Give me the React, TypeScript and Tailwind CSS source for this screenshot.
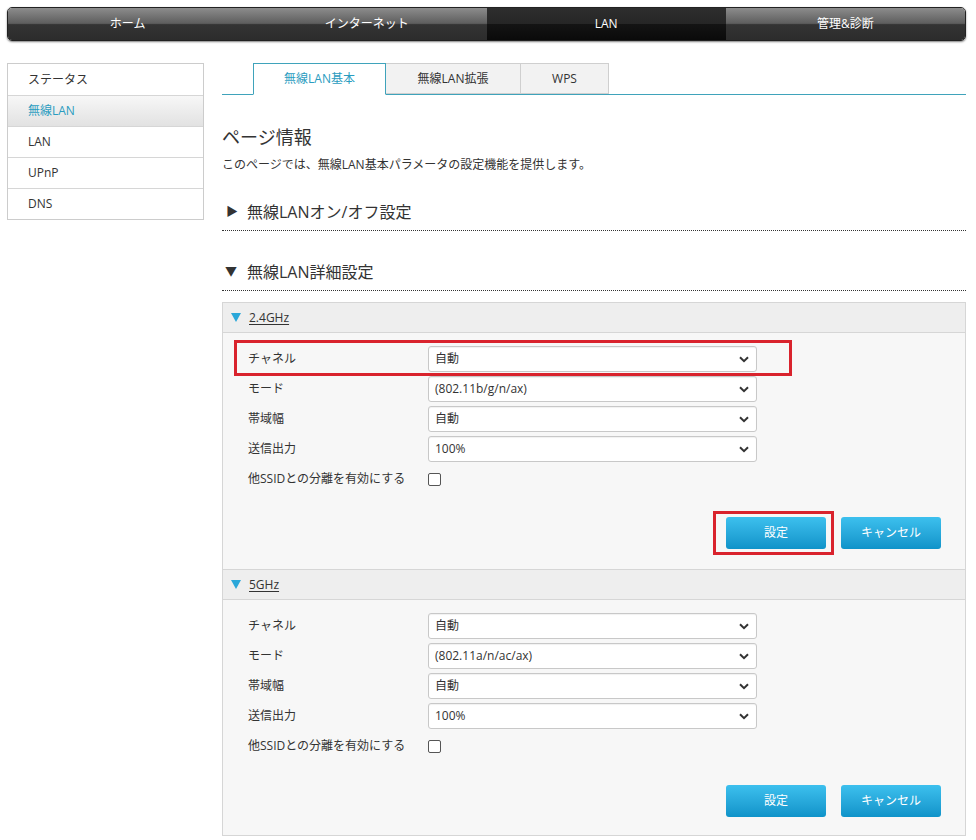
import { useState } from 'react';

const font = { fontFamily: '"Open Sans", "Noto Sans CJK JP", sans-serif' };

const navItems = ['ホーム', 'インターネット', 'LAN', '管理&診断'];
const sideItems = ['ステータス', '無線LAN', 'LAN', 'UPnP', 'DNS'];

type Band = {
  name: string;
  mode: string;
};

const bands: Band[] = [
  { name: '2.4GHz', mode: '(802.11b/g/n/ax)' },
  { name: '5GHz', mode: '(802.11a/n/ac/ax)' },
];

const Select = ({ value }: { value: string }) => (
  <div className="relative w-[329px] h-[26px] bg-white border border-[#c8c8c8] rounded-[3px] shadow-[inset_0_1px_1px_rgba(0,0,0,0.06)] flex items-center pl-[6px] text-[12px] text-[#333]">
    {value}
    <svg
      className="absolute right-[7px] top-[9px]"
      width="10"
      height="7"
      viewBox="0 0 10 7"
    >
      <path d="M1 1.2 L5 5.2 L9 1.2" fill="none" stroke="#333" strokeWidth="2" />
    </svg>
  </div>
);

const BandPanel = ({ band, highlight }: { band: Band; highlight: boolean }) => {
  const rows = [
    { label: 'チャネル', value: '自動' },
    { label: 'モード', value: band.mode },
    { label: '帯域幅', value: '自動' },
    { label: '送信出力', value: '100%' },
  ];
  return (
    <div>
      <div className="h-[30px] bg-[#eeeeee] border-b border-[#d6d6d6] flex items-center pl-[8px] gap-[8px]">
        <svg width="10" height="9" viewBox="0 0 10 9">
          <path d="M0 0 L10 0 L5 9 Z" fill="#2aa7d9" />
        </svg>
        <span className="text-[12px] text-[#333] underline underline-offset-2">{band.name}</span>
      </div>
      <div
        className={`bg-[#f7f7f7] pl-[25px] pr-[24px] pt-[11px] ${
          highlight ? 'pb-[20px]' : 'pb-[18px]'
        }`}
      >
        {rows.map((row, i) => (
          <div key={i} className="relative h-[30px] flex items-center">
            {highlight && i === 0 && (
              <div className="absolute left-[-14px] top-[-4px] w-[558px] h-[36px] border-[3px] border-[#d9232d]" />
            )}
            <span className="w-[180px] text-[12px] text-[#333]">{row.label}</span>
            <Select value={row.value} />
          </div>
        ))}
        <div className="h-[30px] flex items-center">
          <span className="w-[180px] text-[12px] text-[#333]">他SSIDとの分離を有効にする</span>
          <div className="w-[13px] h-[13px] border border-[#555] rounded-[2px] bg-white" />
        </div>
        <div className={`flex justify-end gap-[15px] ${highlight ? 'mt-[23px]' : 'mt-[24px]'}`}>
          <div className="relative">
            {highlight && (
              <div className="absolute left-[-13px] top-[-6px] w-[121px] h-[44px] border-[3px] border-[#d9232d]" />
            )}
            <button className="w-[100px] h-[32px] rounded-[3px] bg-gradient-to-b from-[#3cc0ee] to-[#0e93c9] text-white text-[12px]">
              設定
            </button>
          </div>
          <button className="w-[100px] h-[32px] rounded-[3px] bg-gradient-to-b from-[#3cc0ee] to-[#0e93c9] text-white text-[12px]">
            キャンセル
          </button>
        </div>
      </div>
    </div>
  );
};

export default function App() {
  const [activeSide] = useState(1);
  return (
    <div className="w-[976px] min-h-[840px] bg-white pt-[7px]" style={font}>
      {/* top navigation */}
      <div className="ml-[7px] w-[959px] h-[34px] rounded-[5px] overflow-hidden flex shadow-[0_1px_2px_rgba(0,0,0,0.5)] border border-[#222]">
        {navItems.map((item, i) => (
          <div
            key={i}
            className={`flex-1 flex items-center justify-center text-[12px] text-white ${
              i === 2
                ? 'bg-[linear-gradient(to_bottom,#2e2e2e_0%,#262626_50%,#141414_50%,#0a0a0a_100%)]'
                : 'bg-[linear-gradient(to_bottom,#8c8c8c_0%,#5e5e5e_48%,#333333_52%,#2c2c2c_100%)]'
            }`}
          >
            {item}
          </div>
        ))}
      </div>

      <div className="flex mt-[22px] ml-[7px]">
        {/* sidebar */}
        <div className="w-[197px] border border-[#cccccc] self-start">
          {sideItems.map((item, i) => (
            <div
              key={i}
              className={`h-[31px] flex items-center pl-[20px] text-[12px] ${
                i > 0 ? 'border-t border-[#d6d6d6]' : ''
              } ${
                i === activeSide
                  ? 'bg-gradient-to-b from-[#f7f7f7] to-[#e2e2e2] text-[#2a9cc0]'
                  : 'bg-white text-[#333]'
              }`}
            >
              {item}
            </div>
          ))}
        </div>

        {/* main */}
        <div className="ml-[18px] w-[744px]">
          <div className="flex pl-[31px] border-b border-[#3fa3bb] h-[32px]">
            <div className="w-[133px] h-[32px] border border-[#3fa3bb] border-b-white bg-white flex items-center justify-center text-[12px] text-[#2a9cc0]">
              無線LAN基本
            </div>
            <div className="w-[135px] h-[31px] border border-l-0 border-[#cfcfcf] bg-[#f2f2f2] flex items-center justify-center text-[12px] text-[#333]">
              無線LAN拡張
            </div>
            <div className="w-[88px] h-[31px] border border-l-0 border-[#cfcfcf] bg-[#f2f2f2] flex items-center justify-center text-[12px] text-[#333]">
              WPS
            </div>
          </div>

          <div className="mt-[29px] text-[18px] leading-[26px] text-[#333]">ページ情報</div>
          <div className="mt-[6px] text-[12px] leading-[18px] text-[#333]">
            このページでは、無線LAN基本パラメータの設定機能を提供します。
          </div>

          <div className="mt-[26px] pb-[6px] border-b border-dotted border-[#333] flex items-center h-[31px]">
            <span className="text-[12px] text-[#333] w-[25px] pl-[4px]">▶</span>
            <span className="text-[16px] text-[#333]">無線LANオン/オフ設定</span>
          </div>

          <div className="mt-[29px] pb-[6px] border-b border-dotted border-[#333] flex items-center h-[31px]">
            <span className="text-[12px] text-[#333] w-[25px] pl-[3px]">▼</span>
            <span className="text-[16px] text-[#333]">無線LAN詳細設定</span>
          </div>

          <div className="mt-[11px] border border-[#d6d6d6]">
            {bands.map((band, i) => (
              <div key={i} className={i > 0 ? 'border-t border-[#d6d6d6]' : ''}>
                <BandPanel band={band} highlight={i === 0} />
              </div>
            ))}
          </div>
        </div>
      </div>
    </div>
  );
}
